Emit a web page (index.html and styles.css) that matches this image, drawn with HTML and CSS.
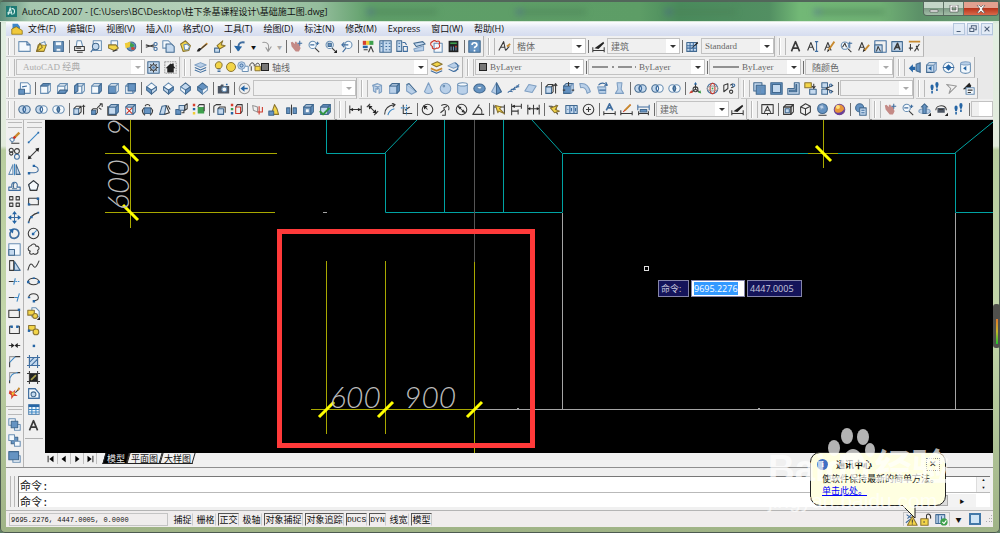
FILE: index.html
```html
<!DOCTYPE html>
<html lang="zh-CN">
<head>
    <meta charset="UTF-8">
    <meta name="viewport" content="width=device-width, initial-scale=1.0">
    <title>AutoCAD 2007</title>
    <link rel="stylesheet" href="styles.css">
</head>
<body>
    <div class="window">
        <header class="titlebar">
            <svg class="app-icon" viewBox="0 0 16 16"><rect width="16" height="16" fill="#1d7a74"/><path d="M3 13L6 3l3 10M8 4c4-1 6 3 3 8M2 10h5" fill="none" stroke="#d9f3ee" stroke-width="1.6"/></svg>
            <h1>AutoCAD 2007 - [C:\Users\BC\Desktop\柱下条基课程设计\基础施工图.dwg]</h1>
            <div class="backdrop"><i></i><i></i><i></i><i></i></div>
            <div class="window-buttons">
                <button aria-label="最小化"><svg viewBox="0 0 10 8"><path d="M1 5h8v2H1z"/></svg></button>
                <button aria-label="最大化"><svg viewBox="0 0 10 8"><path d="M1 0h8v7H1zM3 2v3h4V2z" fill-rule="evenodd"/></svg></button>
                <button class="close" aria-label="关闭"><svg viewBox="0 0 10 8"><path d="M1 0h2l2 2 2-2h2L6 4l3 4H7L5 6 3 8H1l3-4z"/></svg></button>
            </div>
        </header>

        <nav class="menubar">
            <svg class="doc-icon" viewBox="0 0 16 16"><path d="M2 1h7l3 4v6H2z" fill="#3f86c9"/><path d="M1 8l6-3 8 5v5H1z" fill="#f0c93c" stroke="#8a6b12"/></svg>
            <a href="#">文件(F)</a>
            <a href="#">编辑(E)</a>
            <a href="#">视图(V)</a>
            <a href="#">插入(I)</a>
            <a href="#">格式(O)</a>
            <a href="#">工具(T)</a>
            <a href="#">绘图(D)</a>
            <a href="#">标注(N)</a>
            <a href="#">修改(M)</a>
            <a href="#">Express</a>
            <a href="#">窗口(W)</a>
            <a href="#">帮助(H)</a>
            <div class="mdi-buttons">
                <button aria-label="最小化图形"><svg viewBox="0 0 10 10"><path d="M2 8h5"/></svg></button>
                <button aria-label="还原图形"><svg viewBox="0 0 10 10"><path d="M3 3V1h6v5H7M1 4h5v4H1z"/></svg></button>
                <button aria-label="关闭图形"><svg viewBox="0 0 10 10"><path d="M2 2l6 6M8 2L2 8"/></svg></button>
            </div>
        </nav>

        <div class="toolbars">
            <div class="toolrow">
                <div class="toolbar" data-tools="new open save | plot preview publish dwf | cut copy paste match block | undo drop redo drop-off | pan zoom zoomwin zoomprev | props center palettes sheet markup calc | help"></div>
                <div class="toolbar">
                    <span class="tools" data-tools="textstyle"></span>
                    <span class="combo"><select aria-label="文字样式"><option>楷体</option></select></span>
                    <span class="tools" data-tools="| dimstyle"></span>
                    <span class="combo"><select aria-label="标注样式"><option>建筑</option></select></span>
                    <span class="tools" data-tools="| tablestyle"></span>
                    <span class="combo latin"><select aria-label="表格样式"><option>Standard</option></select></span>
                </div>
                <div class="toolbar" data-tools="mtext dtext edittext findtext stylebrush scaletext justify space"></div>
            </div>
            <div class="toolrow">
                <div class="toolbar">
                    <span class="combo workspace latin"><select aria-label="工作空间" disabled><option>AutoCAD 经典</option></select></span>
                    <span class="tools" data-tools="gear home"></span>
                </div>
                <div class="toolbar">
                    <span class="tools" data-tools="layers"></span>
                    <span class="combo layer">
                        <span class="prefix" data-icons="bulb sun vpfreeze unlock"></span><i class="swatch"></i>
                        <select aria-label="图层"><option>轴线</option></select>
                    </span>
                    <span class="tools" data-tools="makecurrent layerprev"></span>
                </div>
                <div class="toolbar">
                    <span class="combo color latin"><i class="swatch"></i><select aria-label="颜色"><option>ByLayer</option></select></span>
                    <span class="tools" data-tools="|"></span>
                    <span class="combo linetype latin"><svg viewBox="0 0 44 6"><path d="M0 3h16M20 3h2M26 3h14M43 3h1"/></svg><select aria-label="线型"><option>ByLayer</option></select></span>
                    <span class="tools" data-tools="|"></span>
                    <span class="combo lineweight latin"><svg viewBox="0 0 26 6"><path d="M0 3h26"/></svg><select aria-label="线宽"><option>ByLayer</option></select></span>
                    <span class="tools" data-tools="|"></span>
                    <span class="combo plotstyle"><select aria-label="打印样式" disabled><option>随颜色</option></select></span>
                </div>
                <div class="toolbar" data-tools="walkback orbitbox orbitball orbitcyl"></div>
            </div>
            <div class="toolrow">
                <div class="toolbar">
                    <span class="tools" data-tools="namedviews | vtop vbottom vleft vright vfront vback | isosw isose isone isonw | camera | prevview"></span>
                    <span class="combo viewlist"><select aria-label="视图" disabled><option></option></select></span>
                </div>
                <div class="toolbar" data-tools="polysolid box wedge cone sphere cylinder torus pyramid helix planar | extrude presspull sweep revolve loft | union subtract intersect | move3d rotate3d align3d"></div>
                <div class="toolbar">
                    <span class="tools" data-tools="vpdialog vpsingle vppoly vpobject vpclip |"></span>
                    <span class="combo"><select aria-label="视口比例" disabled><option></option></select></span>
                </div>
                <div class="toolbar" data-tools="walk fly walkset"></div>
            </div>
            <div class="toolrow">
                <div class="toolbar" data-tools="union subtract intersect | extrudeface moveface offsetface deleteface rotateface taperface copyface colorface | copyedge coloredge | imprint clean separate shell check"></div>
                <div class="toolbar">
                    <span class="tools" data-tools="dimlin dimalign dimarc dimord | dimrad dimjog dimdia dimang | qdim dimbase dimcont | leader tolerance centermark | dimedit dimtedit dimupdate |"></span>
                    <span class="combo"><select aria-label="当前标注样式"><option>建筑</option></select></span>
                    <span class="tools" data-tools="dimstyle"></span>
                </div>
                <div class="toolbar" data-tools="wire2d | wire3d hidden realistic conceptual | visualmgr"></div>
                <div class="toolbar last">
                    <span class="tools" data-tools="pan zoom orbit swivel walk |"></span>
                    <span class="combo rest"></span>
                </div>
            </div>
        </div>

        <main class="workspace-area">
            <div class="side-tools">
                <div class="toolcol" data-tools="erase copyobj mirror offset array move rotate scale stretch trim extend breakpt break join chamfer fillet explode"></div>
                <div class="toolcol second" data-tools="orderfront orderback orderabove"></div>
            </div>
            <div class="side-tools">
                <div class="toolcol" data-tools="line xline pline polygon rect arc circle cloud spline ellipse ellipsearc insert makeblock point hatch gradient region table mtext"></div>
            </div>

            <div class="drawing">
                <div class="canvas">
                    <svg class="model" viewBox="45 120 948 333" preserveAspectRatio="xMinYMin slice">
                        <g class="cyan">
                            <path d="M326.5 120V153.5H385.5M385.5 153.5V212.5H562.5M444.5 120V212M503.5 120V212M562.5 212V153.5H955.5V212.5H993"/>
                            <path d="M385 153L417 120M532 120L562 153M955 153L993 122"/>
                        </g>
                        <path class="cursor" d="M474.5 120V262"/>
                        <path class="white" d="M562.5 213V409M955.5 213V409M474 409.5H993M323 212.5H327M517 408.5H519M758 408.5H760"/>
                        <path class="yellow" d="M130.5 120V228M105 153.5H277M105 212.5H275M823.5 120V168M808 153.5H838"/>
                        <path class="yellow" d="M326.5 261V434M385.5 261V434M474.5 262V453M311 409.5H474"/>
                        <path class="tick" d="M123 146L138 161M123 205L138 220M816 146L831 161M319 417L334 402M378 417L393 402M467 417L482 402"/>
                        <g class="dims">
                            <text x="330" y="408">600</text>
                            <text x="404" y="408">900</text>
                            <text transform="translate(129 210) rotate(-90)">600</text>
                            <text transform="translate(129 136) rotate(-90)">900</text>
                        </g>
                        <rect class="pick" x="644.5" y="266.5" width="4" height="4"/>
                        <rect class="highlight" x="279.5" y="231.5" width="253" height="214"/>
                    </svg>
                    <div class="dynamic-input">
                        <label for="dyn-x">命令:</label>
                        <input id="dyn-x" value="9695.2276">
                        <output>4447.0005</output>
                    </div>
                </div>
                <div class="layout-tabs">
                    <button class="nav" aria-label="首个"><svg viewBox="0 0 12 12"><path d="M2 2h1v8H2zM9 2v8L4 6z"/></svg></button>
                    <button class="nav" aria-label="上一个"><svg viewBox="0 0 12 12"><path d="M8 2v8L3 6z"/></svg></button>
                    <button class="nav" aria-label="下一个"><svg viewBox="0 0 12 12"><path d="M4 2v8l5-4z"/></svg></button>
                    <button class="nav" aria-label="末个"><svg viewBox="0 0 12 12"><path d="M3 2v8l5-4zM9 2h1v8H9z"/></svg></button>
                    <button class="tab active">模型</button>
                    <button class="tab">平面图</button>
                    <button class="tab">大样图</button>
                </div>
            </div>
        </main>

        <section class="command">
            <div class="grip"></div>
            <div class="command-box">
                <div class="history">
                    <span>命令:</span>
                    <div class="spin"><button aria-label="向上滚动">▲</button><button aria-label="向下滚动">▼</button></div>
                </div>
                <div class="prompt">
                    <label for="cmd">命令:</label>
                    <input id="cmd">
                    <div class="hscroll"><i></i><button aria-label="向右滚动">▶</button></div>
                </div>
            </div>
        </section>

        <footer class="statusbar">
            <output class="coords">9695.2276, 4447.0005, 0.0000</output>
            <button>捕捉</button>
            <button>栅格</button>
            <button class="on">正交</button>
            <button>极轴</button>
            <button class="on wide">对象捕捉</button>
            <button class="on wide">对象追踪</button>
            <button class="on latin">DUCS</button>
            <button class="on latin narrow">DYN</button>
            <button>线宽</button>
            <button class="on">模型</button>
            <div class="tray">
                <span class="tray-box" data-tools="comm lock std"></span>
                <button class="tray-menu" aria-label="状态栏菜单">▼</button>
                <button class="clean-screen" aria-label="全屏显示"></button>
                <svg class="resize" viewBox="0 0 8 8"><path d="M6 0h1v1H6zM4 3h1v1H4zM6 3h1v1H6zM1 6h1v1H1zM4 6h1v1H4zM6 6h1v1H6z"/></svg>
            </div>
        </footer>

        <aside class="balloon">
            <div class="balloon-head">
                <span class="info">i</span>
                <strong>通讯中心</strong>
                <button aria-label="关闭通知">✕</button>
            </div>
            <p>使软件保持最新的简单方法。</p>
            <a href="#">单击此处。</a>
            <svg class="tail" viewBox="0 0 16 14"><path d="M1 0L14 13V0" /></svg>
        </aside>

        <div class="watermark">
            <svg viewBox="0 0 48 36"><ellipse cx="20" cy="9" rx="6" ry="8"/><ellipse cx="36" cy="10" rx="6" ry="8"/><ellipse cx="7" cy="21" rx="6" ry="8"/><ellipse cx="43" cy="23" rx="5" ry="7"/><path d="M14 36c2-8 7-14 12-14s10 6 12 14z"/></svg>
            <b>Bai<span>du</span>经验</b>
            <em>jingyan.baidu.com</em>
        </div>
        <div class="gadget"></div>
    </div>

    <script src="tools.js"></script>
</body>
</html>
```

FILE: styles.css
```css
:root {
    --face: #f0f0f0;
    --edge: #a0a0a0;
    --ui: "Open Sans", "Noto Sans CJK SC", sans-serif;
    --mono: "Liberation Mono", "Noto Sans CJK SC", monospace;
}
* {
    box-sizing: border-box;
}
body {
    margin: 0;
    font-family: var(--ui);
    font-size: 9px;
    color: #111;
    background: #5d7f66;
}
button, input, select {
    font: inherit;
    color: inherit;
    margin: 0;
    padding: 0;
    border: 0;
    background: none;
}
a {
    color: inherit;
    text-decoration: none;
}
.window {
    position: relative;
    display: flex;
    flex-direction: column;
    height: 100vh;
    padding: 0 7px 6px 6px;
    overflow: hidden;
    border-radius: 5px;
    background: linear-gradient(180deg, #6a9a78 0, #e2efe2 24px, #e2ebdc 146px, #b8cc9e 150px, #c3d6aa 60%, #9fb386 100%);
    box-shadow: inset 0 0 0 1px #4c5a50;
}

/* title bar */
.titlebar {
    display: flex;
    align-items: center;
    flex: 0 0 22px;
    min-height: 0;
    margin: 0 -6px;
    padding-left: 6px;
    background: linear-gradient(90deg, #5f8f7c 0, #a5c7ae 3%, #b4d0b8 20%, #94bd9c 32%, #5f9f69 37%, #5d9d66 64%, #4a8b5c 68%, #528f62 77%, #72b876 80%, #71b275 88%, #5c9168 92%, #6b9b75 100%);
    border-top: 2px solid #52665a;
    border-bottom: 1px solid #d9eadb;
}
.app-icon {
    width: 11px;
    height: 11px;
}
.titlebar h1 {
    margin: 0 0 0 5px;
    font-size: 9px;
    font-weight: 400;
    line-height: 16px;
    white-space: nowrap;
}
.backdrop {
    display: flex;
    flex: 1;
    justify-content: space-around;
    filter: blur(3px);
}
.backdrop i {
    width: 70px;
    height: 6px;
    background: #4a8056;
    border-left: 7px solid #4a5c92;
    opacity: .5;
}
.window-buttons {
    display: flex;
    align-self: flex-start;
    border: 1px solid #56695d;
    border-top: 0;
    border-radius: 0 0 4px 4px;
    overflow: hidden;
}
.window-buttons button {
    width: 20px;
    height: 13px;
    display: grid;
    place-items: center;
    background: linear-gradient(#c4d5c8 45%, #7f9c87 50%, #a3bda8);
    border-right: 1px solid #5f7366;
}
.window-buttons .close {
    width: 34px;
    border: 0;
    background: linear-gradient(#e2a08f 45%, #b9351c 50%, #d9694a);
}
.window-buttons svg {
    width: 10px;
    height: 8px;
    fill: #fff;
    stroke: #4a4a4a;
    stroke-width: .6;
}

/* menu bar */
.menubar {
    display: flex;
    align-items: center;
    gap: 11px;
    flex: 0 0 14px;
    min-height: 0;
    padding-left: 5px;
    background: linear-gradient(#fdfdff, #e4e9f5 40%, #d5dcef);
    white-space: nowrap;
}
.menubar a {
    line-height: 14px;
}
.doc-icon {
    width: 12px;
    height: 12px;
    margin-right: -6px;
}
.mdi-buttons {
    display: flex;
    gap: 2px;
    margin-left: auto;
}
.mdi-buttons button {
    width: 12px;
    height: 12px;
    background: #e3ebf6;
    border: 1px solid #b4c6dc;
    display: grid;
    place-items: center;
}
.mdi-buttons svg {
    width: 8px;
    height: 8px;
    fill: none;
    stroke: #4c5e78;
    stroke-width: 1.3;
}

/* toolbars */
.toolbars {
    flex: 0 0 84px;
    min-height: 0;
    background: #e9e9e9;
    border-bottom: 1px solid #8a8a8a;
}
.toolrow {
    display: flex;
    gap: 2px;
    height: 21px;
}
.toolbar {
    display: flex;
    align-items: center;
    background: var(--face);
    border-right: 1px solid #b5b5b5;
    border-bottom: 1px solid #c9c9c9;
}
.toolbar.last {
    flex: 1;
    border-right: 0;
}
.toolbar::before {
    content: "";
    width: 5px;
    height: 17px;
    margin: 0 1px 0 2px;
    border: solid #b9b9b9;
    border-width: 0 1px;
    box-shadow: inset 1px 0 #fff;
}
.tools {
    display: flex;
    align-items: center;
}
.tool {
    width: 17px;
    height: 18px;
    display: grid;
    place-items: center;
}
.tool svg, .prefix svg {
    display: block;
    width: 13px;
    height: 13px;
}
.tool.drop {
    width: 9px;
    font-size: 5px;
}
.tool.drop-off {
    width: 9px;
    font-size: 5px;
    color: #aaa;
}
.sep {
    width: 1px;
    height: 13px;
    margin: 0 1px 0 2px;
    background: #6e6e6e;
}
.combo {
    position: relative;
    display: flex;
    align-items: center;
    width: 73px;
    height: 16px;
    padding-left: 3px;
    border: 1px solid #c2c2c2;
    background: linear-gradient(90deg, transparent calc(100% - 13px), #fff 0);
    color: #666;
}
.combo::after {
    content: "";
    position: absolute;
    right: 3px;
    top: 6px;
    border: 3px solid transparent;
    border-top-color: #333;
    border-bottom: 0;
}
.combo:has(select:disabled)::after {
    border-top-color: #aaa;
}
.combo.workspace::after {
    border-top-color: #333;
}
.combo select {
    flex: 1;
    min-width: 0;
    appearance: none;
    opacity: 1;
}
.combo.latin {
    font-family: "Liberation Serif", "Noto Sans CJK SC", serif;
}
.combo.workspace {
    width: 129px;
    padding-left: 6px;
    color: #aaa;
}
.combo.layer {
    width: 219px;
}
.combo.color {
    width: 109px;
}
.combo.linetype {
    width: 117px;
}
.combo.lineweight {
    width: 92px;
}
.combo.plotstyle {
    width: 88px;
    padding-left: 6px;
}
.combo.viewlist {
    width: 103px;
}
.combo.rest {
    flex: 1;
    width: auto;
}
.combo.rest::after {
    display: none;
}
.combo svg {
    flex: none;
}
.prefix {
    display: flex;
}
.prefix svg {
    width: 12px;
    height: 12px;
}
.linetype > svg {
    width: 44px;
    height: 6px;
}
.lineweight > svg {
    width: 26px;
    height: 6px;
}
.linetype > svg, .lineweight > svg {
    margin-right: 3px;
    stroke: #333;
}
.swatch {
    flex: none;
    width: 8px;
    height: 8px;
    margin-right: 3px;
    background: #777;
    border: 1px solid #222;
}

/* icon strokes and fills */
.tool svg, .prefix svg {
    fill: none;
    stroke-width: 1.3;
    stroke-linejoin: round;
}
.k { stroke: #3a3a3a; }
.n { stroke: #3f6d9f; }
.c { stroke: #3b86c4; }
.rd { stroke: #cc3527; }
.gr { stroke: #999; }
.or { stroke: #c88a2e; stroke-width: 2.2; }
.bx { stroke: #42698f; fill: #c4d9ee; }
.bd { stroke: #42698f; fill: #6593c2; }
.sf { stroke: #7f9fc2; fill: #b9d0e9; }
.wf { stroke: #6a8fb3; fill: #f4f9fd; }
.yf { stroke: #8a7430; fill: #f3d548; }
.K { fill: #222; }
.N { fill: #2565a5; }
.R { fill: #d5402f; }
.G { fill: #3ea04c; }
.Y { fill: #f0cc35; }
.P { fill: #c48a86; }
.A { fill: #4b5563; }

/* side toolbars and drawing area */
.workspace-area {
    display: flex;
    flex: 1;
    min-height: 0;
    background: var(--face);
}
.side-tools {
    width: 18px;
    margin-right: 1px;
    border-right: 1px solid #b5b5b5;
}
.side-tools + .side-tools {
    border-right: 0;
}
.toolcol {
    padding: 2px 0 5px;
    border-bottom: 1px solid #b0b0b0;
}
.toolcol.second {
    border-bottom: 0;
}
.toolcol::before {
    content: "";
    display: block;
    height: 4px;
    margin: 0 1px 1px 2px;
    border: solid #b9b9b9;
    border-width: 1px 0;
}
.toolcol .tool {
    height: 16px;
}
.drawing {
    flex: 1;
    display: flex;
    flex-direction: column;
    min-width: 0;
    margin-left: 1px;
}
.canvas {
    position: relative;
    flex: 1;
    min-height: 0;
    background: #000;
    overflow: hidden;
}
.model {
    display: block;
    width: 100%;
    height: 100%;
    fill: none;
}
.cyan { stroke: #00a3a3; }
.cursor { stroke: #555; }
.white { stroke: #a5a5a5; }
.yellow { stroke: #a8a800; }
.tick { stroke: #ff0; stroke-width: 3; }
.pick { stroke: #ddd; }
.highlight { stroke: #ff3a3a; stroke-width: 5; }
.dims text {
    font: italic 300 30px Lato, sans-serif;
    fill: #bbb;
}
.dynamic-input {
    position: absolute;
    left: 613px;
    top: 160px;
    display: flex;
    gap: 2px;
    color: #c9c9dd;
}
.dynamic-input > * {
    height: 17px;
    line-height: 15px;
    padding: 0 2px;
    border: 1px solid #8484a8;
    background: #14145a;
}
.dynamic-input label {
    width: 31px;
}
.dynamic-input input {
    width: 54px;
    background: #fff;
    color: #111;
    outline: 0;
}
.dynamic-input output {
    width: 55px;
}
.dynamic-input input::selection {
    background: #3399ff;
    color: #fff;
}
.layout-tabs {
    display: flex;
    flex: 0 0 14px;
    align-items: flex-start;
}
.layout-tabs .nav {
    width: 13px;
    height: 11px;
    border-right: 1px solid #c0c0c0;
}
.layout-tabs .nav svg {
    display: block;
    width: 10px;
    height: 10px;
    margin: 0 auto;
}
.layout-tabs .tab {
    position: relative;
    isolation: isolate;
    height: 11px;
    padding: 0 3px;
    line-height: 10px;
}
.layout-tabs .tab::before {
    content: "";
    position: absolute;
    inset: 0;
    z-index: -1;
    border: solid #222;
    border-width: 0 1px 1px;
    clip-path: none;
    transform: skewX(-16deg);
}
.layout-tabs .nav + .tab {
    margin-left: 7px;
}
.layout-tabs .active {
    color: #eee;
}
.layout-tabs .active::before {
    background: #000;
}

/* command line */
.command {
    display: flex;
    flex: 0 0 44px;
    min-height: 0;
    padding: 8px 3px 3px 4px;
    background: var(--face);
    border-top: 1px solid #8e8e8e;
    border-bottom: 1px solid #b4b4b4;
}
.command .grip {
    width: 5px;
    margin-right: 3px;
    border: solid #b9b9b9;
    border-width: 0 1px;
}
.command-box {
    flex: 1;
    background: #fff;
    border-left: 1px solid #777;
    border-top: 1px solid #777;
    font-family: var(--mono);
    font-size: 11px;
}
.history, .prompt {
    display: flex;
    align-items: center;
    padding-left: 1px;
}
.history {
    height: 16px;
    border-bottom: 1px solid #b9b9b9;
}
.prompt {
    height: 15px;
}
.prompt input {
    flex: 1;
    outline: 0;
}
.spin {
    display: flex;
    flex-direction: column;
    width: 14px;
    height: 15px;
    margin-left: auto;
    background: #f3f3f3;
    border-left: 1px solid #ddd;
}
.spin button {
    flex: 1;
    font-size: 4px;
    line-height: 7px;
}
.hscroll {
    display: flex;
    align-items: center;
    justify-content: flex-end;
    width: 150px;
    height: 13px;
    margin-right: 14px;
    background: #f3f3f3;
}
.hscroll i {
    width: 20px;
    height: 11px;
    border: 1px solid #aaa;
    background: #ddd;
}
.hscroll button {
    width: 28px;
    font-size: 5px;
}

/* status bar */
.statusbar {
    display: flex;
    align-items: center;
    gap: 2px;
    flex: 0 0 16px;
    min-height: 0;
    padding-left: 3px;
    background: #f0eded;
}
.coords {
    width: 159px;
    height: 13px;
    margin-right: 2px;
    padding-left: 1px;
    line-height: 12px;
    border: 1px solid #c4c4c4;
    font-family: var(--mono);
    font-size: 7px;
}
.statusbar > button {
    width: 21px;
    height: 13px;
    line-height: 11px;
    white-space: nowrap;
    border: 1px solid transparent;
    border-right-color: #ccc;
}
.statusbar > .on {
    border-left-color: #555;
    border-top-color: #555;
}
.statusbar > .wide {
    width: 39px;
}
.statusbar > .latin {
    font-family: var(--mono);
    font-size: 8px;
}
.statusbar > .narrow {
    width: 17px;
}
.tray {
    display: flex;
    align-items: center;
    gap: 4px;
    margin-left: auto;
}
.tray-box {
    display: flex;
    height: 14px;
    align-items: center;
    border: solid #c4c4c4;
    border-width: 1px 1px 0;
}
.tray-box .tool {
    width: 15px;
    height: 13px;
}
.tray-menu {
    width: 9px;
    font-size: 6px;
}
.clean-screen {
    width: 12px;
    height: 12px;
    margin-left: 2px;
    border: 2px solid #4378a8;
    background: #cfe4f5;
}
.resize {
    width: 8px;
    height: 8px;
    fill: #aaa;
}

/* notification, watermark and desktop gadget sit over the window */
.balloon {
    position: absolute;
    right: 54px;
    bottom: 27px;
    width: 136px;
    height: 54px;
    padding: 5px 5px 0 11px;
    border: 1px solid #222;
    border-radius: 10px;
    background: #ffffe1;
    font-size: 9px;
    white-space: nowrap;
}
.balloon-head {
    display: flex;
    align-items: center;
    height: 12px;
    margin-left: -5px;
}
.balloon-head strong {
    margin-left: 8px;
}
.balloon-head button {
    width: 14px;
    height: 13px;
    margin-left: auto;
    border: 1px dotted #888;
    line-height: 10px;
}
.info {
    width: 11px;
    height: 11px;
    border-radius: 50%;
    background: #3f6fc4;
    color: #fff;
    font: bold 8px/11px "Liberation Serif", serif;
    text-align: center;
}
.balloon p {
    margin: 3px 0 0;
    line-height: 12px;
}
.balloon a {
    display: block;
    width: max-content;
    line-height: 12px;
    color: #00f;
    text-decoration: underline;
}
.tail {
    position: absolute;
    left: 90px;
    top: 52px;
    width: 16px;
    height: 14px;
    fill: #ffffe1;
    stroke: #222;
}
.watermark {
    position: absolute;
    right: 56px;
    bottom: 20px;
    width: 176px;
    color: rgba(255, 255, 255, .7);
    pointer-events: none;
    white-space: nowrap;
}
.watermark svg {
    display: block;
    width: 48px;
    height: 36px;
    margin: 0 0 -14px 59px;
    fill: rgba(255, 255, 255, .7);
}
.watermark b {
    display: block;
    height: 40px;
    font: bold 37px/40px "Liberation Sans", "Noto Sans CJK SC", sans-serif;
}
.watermark span {
    margin-right: 4px;
}
.watermark em {
    display: block;
    font: 21px/24px "Liberation Sans", sans-serif;
}
.gadget {
    position: absolute;
    right: 0;
    top: 304px;
    width: 7px;
    height: 44px;
    border-radius: 3px;
    background: linear-gradient(#e07a2a, #c9b62a 50%, #21c42f) 3px 15px / 2px 25px no-repeat, #50504c;
}
```

FILE: tools.js
```js
// shape helpers, all icons are drawn on a 16x16 grid
const p = (cls, d) => `<path class="${cls}" d="${d}"/>`;
const c = (cls, x, y, r) => `<circle class="${cls}" cx="${x}" cy="${y}" r="${r}"/>`;
const e = (cls, x, y, rx, ry) => `<ellipse class="${cls}" cx="${x}" cy="${y}" rx="${rx}" ry="${ry}"/>`;
const cube = (front, top, side) =>
    p(front, 'M2 5H11V14H2Z') + p(top, 'M2 5L5 2H14L11 5Z') + p(side, 'M11 5L14 2V11L11 14Z');
const iso = (top, left, right) =>
    p(top, 'M8 1L14 6L8 10L2 6Z') + p(left, 'M2 6L8 10V15L2 10Z') + p(right, 'M8 10L14 6V10L8 15Z');
const lens = p('k', 'M10 10L15 15') + c('wf', 7, 6, 4.5);
const pencil = p('or', 'M14 2L7 12') + p('K', 'M5 15L6 11L8 13Z');
const letterA = p('k', 'M2 13L6 3L10 13M4 9H9');
const feet = p('N', 'M3 6a2 3 0 0 1 4 0L6 10H4ZM4 11H6L6 14H4ZM9 3a2 3 0 0 1 4 0L12 7H10ZM10 8H12V11H10Z');
const caret = p('K', 'M12 16H16V12Z');
const rings = (a, b) => c(a, 5.5, 8, 4.5) + c(b, 10.5, 8, 4.5) + p('n', 'M8 4.5C6 7 6 9 8 11.5C10 9 10 7 8 4.5');
const hand = p('P', 'M1 3L3 2L6 5V2H8L9 5L11 4L13 10L11 14H7L2 8Z');
const dimH = p('k', 'M1 3V13M15 3V13M1 8H15') + p('K', 'M1 8L5 6V10ZM15 8L11 6V10Z');
const dimBrush = p('k', 'M1 9V15M1 13H15M15 9V15') + p('K', 'M3 10L14 2L15 4L8 11Z');

const icons = {
    new: p('wf', 'M1 2H11L15 6V14H1Z') + p('n', 'M11 2V6H15'),
    open: p('yf', 'M2 14L4 6H14L11 14Z') + p('wf', 'M5 5L12 2L13 6') + p('yf', 'M2 14L6 4L9 9Z'),
    save: p('bd', 'M2 2H14V14H2Z') + p('wf', 'M4 2H12V7H4Z') + p('wf', 'M5 10H11V14H5Z'),
    plot: p('wf', 'M5 1H10L12 8H4Z') + p('k', 'M2 8H14V13H2ZM4 10H10M5 15H12'),
    preview: p('wf', 'M4 1H14V13H4Z') + c('bx', 7, 8, 4) + p('n', 'M4 11L1 15'),
    publish: p('wf', 'M5 1H13V8H5Z') + p('yf', 'M2 6H11L14 10L9 13L2 10Z') + p('k', 'M7 14L13 12'),
    dwf: c('bd', 9, 8, 5.5) + p('G', 'M8 3L13 6L10 10L7 7Z') + p('Y', 'M1 4L8 2L7 9L2 10Z') + p('R', 'M9 9H13V12H9Z'),
    cut: p('k', 'M1 6L12 9M1 9L11 6') + c('n', 13, 5, 2) + c('n', 13, 11, 2),
    copy: p('wf', 'M1 1H8L11 4V10H1Z') + p('bx', 'M5 5H12L15 8V15H5Z'),
    paste: p('yf', 'M2 5L8 1L14 7L12 13L5 14Z') + p('wf', 'M6 6L10 5L13 8L11 12L7 12Z'),
    match: p('K', 'M1 14C3 9 5 9 7 11L4 14Z') + p('or', 'M7 10L14 4') + p('k', 'M6 11L13 5'),
    block: p('bx', 'M2 10H8V15H2Z') + p('yf', 'M5 7L12 1L10 6L15 7L8 11Z'),
    undo: '<path class="n" stroke-width="2.4" d="M13 3C7 2 4 5 6 13"/>' + p('N', 'M0 7L5 14L10 8Z'),
    redo: p('gr', 'M3 3C9 2 12 5 10 13M7 9L10 14L14 8'),
    pan: hand + p('n', 'M12 1V7M9 4H15'),
    zoom: lens + p('n', 'M11 4H15M13 2V6M4 6H9'),
    zoomwin: lens + p('bd', 'M5 4H9V8H5Z') + caret,
    zoomprev: c('wf', 9, 6, 4.5) + p('n', 'M6 10L2 15M1 6H9M4 3L1 6L4 9'),
    props: p('R', 'M1 1H5V6H1Z') + p('Y', 'M5 1H9V6H5Z') + p('G', 'M9 1H14V6H9Z') + p('N', 'M1 7H7V10H1Z') + p('k', 'M8 15L11 8L14 15M2 12H7'),
    center: p('bx', 'M1 1H15V15H1Z') + p('n', 'M5 1V15M8 4H10M12 4H14M8 8H10M12 8H14M8 12H10M12 12H14M2 4H4M2 8H4'),
    palettes: p('bx', 'M1 1H7V14H1Z') + p('n', 'M3 4H5M3 8H5M8 3H11L13 6M9 8H14V14H9Z'),
    sheet: p('bx', 'M1 4L12 2L15 5L4 8Z') + p('sf', 'M1 11L13 7V13L2 14Z'),
    markup: p('wf', 'M5 4H15V15H5Z') + p('rd', 'M3 2C5 0 7 1 8 2C11 0 13 3 11 5C13 8 11 11 8 10C6 12 2 11 3 8C0 7 0 3 3 2Z'),
    calc: p('K', 'M2 1H14V15H2Z') + p('G', 'M4 3H12V5H4Z') + p('wf', 'M5 8V13M8 8V13M11 8V13') + p('R', 'M10 7H12V9H10Z'),
    help: p('bd', 'M1 1H15V15H1Z') + '<path stroke="#fff" stroke-width="2" d="M5 6C5 2 11 3 11 6C11 8 8 8 8 10M8 12V14"/>',

    textstyle: p('k', 'M1 13L7 2L9 12M3 9H9M9 13C12 11 12 9 14 8') + p('or', 'M11 8L15 5'),
    dimstyle: dimBrush,
    tablestyle: p('bx', 'M1 3H13V14H1Z') + p('n', 'M1 7H13M5 3V14M9 3V14M1 10H13') + p('K', 'M6 11L14 2L15 4Z'),
    mtext: '<path class="k" stroke-width="2" d="M3 14L8 2L13 14M5 10H11"/>',
    dtext: letterA + p('n', 'M11 2H15M13 2V14M11 14H15'),
    edittext: letterA + pencil,
    findtext: c('wf', 6, 7, 4.5) + p('k', 'M3 9L6 4L8 9M10 11L14 15') + p('n', 'M12 2V10M10 4H15'),
    stylebrush: letterA + p('or', 'M15 6L9 13') + p('K', 'M7 15L8 11L10 13Z'),
    scaletext: p('n', 'M1 1H15V15H1Z') + p('bx', 'M1 6H10V15H1Z') + p('k', 'M3 14L5 8L8 14'),
    justify: p('bx', 'M1 2H14V14H1Z') + '<path class="k" stroke-width="2" d="M4 12L8 4L11 12M5 9H10"/>',
    space: p('or', 'M1 2H15') + p('k', 'M1 10H6M3 5V13M14 5L8 14M10 7L13 13'),

    gear: p('bx', 'M1 1H15V15H1Z') + c('k', 8, 8, 3.5) + c('n', 8, 8, 1) + p('k', 'M8 2V4M8 12V14M2 8H4M12 8H14M4 4L5 5M11 11L12 12M4 12L5 11M11 5L12 4'),
    home: '<path class="gr" stroke-dasharray="2 1" d="M1 1H15V15H1Z"/>' + p('K', 'M2 9L8 3L10 4V3H12V6L14 9H12V14H4V9Z'),
    layers: p('sf', 'M1 5L8 2L15 5L8 8Z') + p('n', 'M1 8L8 11L15 8M1 11L8 14L15 11'),
    bulb: p('yf', 'M5 10C1 6 4 1 8 1C12 1 14 6 10 10Z') + p('n', 'M6 12H10M6 14H10'),
    sun: c('yf', 8, 8, 6),
    vpfreeze: p('wf', 'M7 7H15V14H7Z') + c('sf', 6, 6, 5) + c('n', 6, 6, 2),
    unlock: p('yf', 'M8 7H15V13H8Z') + p('k', 'M1 7C1 1 8 1 7 7M3 7V13M9 6C9 2 14 2 14 6'),
    makecurrent: p('yf', 'M2 4L9 1L15 4L8 7Z') + p('or', 'M1 9L8 12L15 9') + p('n', 'M1 12L8 15L15 12'),
    layerprev: p('sf', 'M1 6L9 2L15 6L8 9Z') + p('n', 'M2 10L8 13L14 10M10 2C15 5 15 10 9 13'),
    walkback: p('N', 'M1 9L6 4V7H9V11H6V14Z') + p('bd', 'M10 4L15 2V14L10 12Z'),
    orbitbox: cube('bx', 'wf', 'sf') + p('N', 'M4 9L8 6V12Z'),
    orbitball: c('wf', 8, 8, 6.5) + p('n', 'M1 8H15') + p('N', 'M8 4L12 8L8 12L4 8Z'),
    orbitcyl: p('wf', 'M2 3V13C4 16 12 16 14 13V3') + e('sf', 8, 3, 6, 2) + p('N', 'M5 9L9 6V12Z'),

    namedviews: p('wf', 'M3 1H12L15 4V14H3Z') + p('bd', 'M1 9H8V15H1Z') + p('n', 'M5 6L11 5'),
    vtop: cube('wf', 'bd', 'wf'),
    vbottom: cube('wf', 'wf', 'wf') + p('bd', 'M2 14L5 10H14L11 14Z'),
    vleft: cube('wf', 'wf', 'wf') + p('bd', 'M2 5L6 2V11L2 14Z'),
    vright: cube('wf', 'wf', 'bd'),
    vfront: cube('bd', 'wf', 'wf'),
    vback: cube('wf', 'wf', 'wf') + p('bd', 'M5 2H14V11H5Z'),
    isosw: iso('wf', 'bd', 'bx'),
    isose: iso('wf', 'bx', 'bd'),
    isone: iso('bx', 'wf', 'bd'),
    isonw: iso('bd', 'bd', 'wf'),
    camera: p('A', 'M1 5H4L5 3H8V5H15V14H1Z') + c('wf', 9, 9, 3) + p('N', 'M11 2H13V4H11Z'),
    prevview: c('gr', 8, 8, 6.5) + p('N', 'M3 8L8 4V7H12V9H8V12Z'),
    polysolid: p('sf', 'M2 4L8 6V9L6 8V13L3 11V7ZM8 6L13 4V12L10 14V9ZM2 4L8 2L13 4'),
    box: cube('sf', 'bx', 'bd'),
    wedge: p('sf', 'M2 3L14 12L8 15L2 11Z') + p('bx', 'M2 3L5 2L14 12'),
    cone: p('sf', 'M8 1L13 12C11 15 5 15 3 12Z'),
    sphere: c('sf', 8, 8, 6.5) + c('wf', 6, 5, 1),
    cylinder: p('sf', 'M2 3V13C4 16 12 16 14 13V3') + e('wf', 8, 3, 6, 2),
    torus: e('bd', 8, 8, 7, 5.5) + e('wf', 8, 7, 3, 1.5),
    pyramid: p('sf', 'M8 1L14 12L8 15L2 12Z') + p('bd', 'M8 1L14 12L8 15Z'),
    helix: p('n', 'M1 13C4 9 6 14 5 10C5 7 9 12 9 8C9 4 13 9 13 5L15 3M3 11L7 12M7 8L11 9M11 5L15 6'),
    planar: p('sf', 'M1 11L6 3L15 5L10 13Z'),
    extrude: p('bx', 'M1 6H8V14H1Z') + p('k', 'M1 6L4 3H10L8 6M10 3V12L8 14M13 14V3M11 5L13 2L15 5'),
    presspull: cube('bd', 'bx', 'sf') + p('k', 'M8 0V5M1 10H4M12 10H15'),
    sweep: p('sf', 'M1 2C7 1 12 4 14 12L10 14C9 8 6 6 2 7Z'),
    revolve: p('sf', 'M2 6H12V14H4Z') + p('n', 'M3 4C6 0 11 1 13 4M12 0L14 4L10 5M4 10H12'),
    loft: p('sf', 'M5 1H11L10 9L13 14H3L6 9Z'),
    union: rings('bx', 'bx'),
    subtract: rings('bx', 'wf'),
    intersect: rings('wf', 'wf') + p('bd', 'M8 5C6 7 6 9 8 11C10 9 10 7 8 5'),
    move3d: p('k', 'M8 9V2M8 9L2 13M8 9L14 13') + p('R', 'M0 14L3 10L5 13Z') + p('N', 'M6 3H10L8 0Z') + p('G', 'M11 13L14 10L15 14Z') + c('k', 8, 9, 3),
    rotate3d: c('n', 8, 8, 6.5) + `<ellipse class="rd" cx="8" cy="8" rx="3" ry="6.5"/>` + e('gr', 8, 8, 6.5, 3) + p('G', 'M7 7H9V9H7Z'),
    align3d: p('k', 'M1 4L6 2V8L1 12ZM9 4L12 2M10 7L13 6') + c('k', 10, 12, 2) + c('n', 13, 4, 1.5),
    vpdialog: p('bx', 'M1 1H11V11H1Z') + p('bd', 'M4 4H15V15H4Z') + p('wf', 'M5 7H14M9 7V15'),
    vpsingle: p('bd', 'M1 1H15V15H1Z') + p('bx', 'M3 3H13V13H3Z'),
    vppoly: p('bx', 'M9 1H15V15H1V8H9Z') + p('bd', 'M12 3V12H3V10H11V3Z'),
    vpobject: p('yf', 'M1 1H9V7H1Z') + p('bx', 'M7 9H15V15H7Z') + p('k', 'M12 2V7M10 5L12 8L14 5'),
    vpclip: p('bx', 'M1 1H8V7H1ZM1 9H8V15H1Z') + p('k', 'M6 8L15 4M6 8L15 12') + c('n', 12, 4, 1.5) + c('n', 12, 12, 1.5),
    walk: feet,
    fly: p('gr', 'M2 3L14 5L5 14L7 8Z'),
    walkset: p('K', 'M1 9L9 1L11 4V9Z') + p('wf', 'M5 7H15V15H5Z') + p('k', 'M7 10H13M7 13H11'),

    extrudeface: p('bx', 'M1 7H7V14H1Z') + p('k', 'M1 7L4 4H10L7 7M10 4V11L7 14M13 14V2M11 4H15'),
    moveface: p('bd', 'M2 9H7V14H2Z') + p('k', 'M2 9L4 7H9V12L7 14M9 6L14 1M12 1H15V5M11 6L14 8'),
    offsetface: cube('bx', 'bx', 'bd') + p('k', 'M1 4V15H12'),
    deleteface: cube('wf', 'bx', 'bx') + p('rd', 'M3 6L10 13M10 6L3 13'),
    rotateface: p('bd', 'M4 6H12V13H4Z') + p('k', 'M4 6C0 9 2 13 5 15M12 6C16 9 14 13 11 15M5 4C6 1 10 1 11 4'),
    taperface: p('bx', 'M2 14L5 4L10 3L8 14Z') + p('k', 'M10 3L14 12L8 14M12 3L15 8'),
    copyface: p('bd', 'M1 8H7V14H1Z') + p('bx', 'M5 3H12V9H5Z') + p('k', 'M12 9V3L15 1V7ZM8 12H11V9'),
    colorface: p('G', 'M7 5H15V13H7Z') + p('k', 'M7 5L9 2H15V10') + p('R', 'M1 1H4V4H1Z') + p('N', 'M1 6H4V9H1Z') + p('Y', 'M1 11H4V14H1Z'),
    copyedge: p('bx', 'M6 7H13V14H6Z') + p('k', 'M1 4V12M1 4L4 2H10M6 7L8 5H15V12'),
    coloredge: p('rd', 'M7 5H13V13H7Z') + p('k', 'M7 5L9 2H15V10L13 13') + p('R', 'M1 1H4V4H1Z') + p('G', 'M1 6H4V9H1Z') + p('N', 'M1 11H4V14H1Z'),
    imprint: p('gr', 'M2 3L8 5V11L3 9Z') + p('rd', 'M10 4V14M8 11H14V5'),
    clean: p('yf', 'M8 2L11 7L13 14H4Z') + p('bd', 'M1 10H7V15H1Z'),
    separate: p('bd', 'M2 6H6V13H2ZM10 6H14V13H10Z') + p('k', 'M8 2V15'),
    shell: cube('bd', 'bx', 'bd') + p('wf', 'M4 7H9V12H4Z'),
    check: cube('bx', 'bd', 'bd') + '<path stroke="#2f9440" stroke-width="2.6" d="M1 10L5 14L13 6"/>',

    dimlin: dimH,
    dimalign: p('k', 'M1 5L5 1M10 15L15 10M3 3L13 13') + p('K', 'M3 3L8 4L4 8ZM13 13L8 12L12 8Z'),
    dimarc: p('k', 'M2 14C2 7 7 3 14 2M11 0L15 2L12 5') + p('c', 'M6 15C7 10 10 8 14 7'),
    dimord: p('k', 'M4 2V13H15M6 9L12 5') + '<path class="c" stroke-dasharray="2 1" d="M1 6H10M8 2V15"/>',
    dimrad: c('k', 8, 8, 6.5) + p('k', 'M8 8L4 4') + p('K', 'M3 3L8 4L4 8Z'),
    dimjog: p('k', 'M4 3C10 0 15 4 13 9M3 12L8 8L7 6L11 4M5 15H9V9'),
    dimdia: c('k', 8, 8, 6.5) + p('K', 'M3 4L8 5L6 8ZM13 12L8 11L10 8Z') + p('k', 'M4 4L12 12'),
    dimang: p('k', 'M15 14H1L9 2M7 5C11 6 13 9 12 14'),
    qdim: p('k', 'M1 2V14M1 5H14M14 2V14') + p('yf', 'M3 3L10 5L8 7L14 13L7 10L6 12Z'),
    dimbase: p('k', 'M2 1V15M2 4H14M2 10H10M14 1V7M10 8V14') + p('K', 'M2 4L6 2V6Z'),
    dimcont: p('k', 'M1 2V14M8 2V14M15 2V14M1 7H15') + p('K', 'M1 7L4 5V9ZM15 7L12 5V9Z'),
    leader: p('k', 'M1 4H5L12 14M10 2V9') + p('yf', 'M3 6L12 3L9 8L14 10L8 12Z'),
    tolerance: p('bx', 'M1 3H15V13H1Z') + p('n', 'M6 3V13M11 3V13M3 8H4M8 6V10M13 6V10'),
    centermark: c('k', 8, 8, 6.5) + p('k', 'M8 5V11M5 8H11'),
    dimedit: '<path class="n" stroke-width="2" d="M4 9L8 1L12 9M6 6H10"/>' + p('k', 'M1 10V15M15 10V15M1 13H15'),
    dimtedit: p('rd', 'M4 11L13 2') + p('or', 'M6 9L13 2') + p('k', 'M1 9V15M1 13H15M15 10V15'),
    dimupdate: p('n', 'M1 2V9M15 2V9M1 5H15') + p('bd', 'M4 8H12V11H4Z') + p('k', 'M2 10V15M14 10V15M2 13H14'),
    wire2d: p('k', 'M1 2H15V13H1ZM4 12L8 4L12 12M6 9H10M8 13V15'),
    wire3d: cube('k', 'k', 'k') + p('bx', 'M4 7H9V12H4Z'),
    hidden: p('k', 'M8 1L14 4V11L8 15L2 12V5ZM2 5L8 7L14 4M8 7V15'),
    realistic: c('bd', 8, 7, 6) + p('sf', 'M4 4L8 2L10 6L6 8Z') + p('k', 'M3 15H13'),
    conceptual: '<circle cx="8" cy="8" r="6.5" fill="#e8953a" stroke="#754b91"/><circle cx="6" cy="5" r="2.5" fill="#ffe07a"/><path fill="#653e9c" d="M2 10C6 14 11 12 14 7C14 16 4 17 2 10Z"/>',
    visualmgr: c('bd', 7, 6, 5) + p('bx', 'M7 6H15V15H7Z') + p('n', 'M9 9H13M9 12H13'),
    orbit: e('sf', 8, 10, 7, 3) + p('bd', 'M6 13V5H4L8 1L12 5H10V13Z') + caret,
    swivel: p('A', 'M3 6H12V12H3Z') + p('k', 'M1 9C1 2 14 1 14 9M5 8H10') + caret,

    erase: '<path stroke="#c88a2e" stroke-width="3" d="M8 8L14 2"/><path stroke="#cc3527" stroke-width="3" d="M6 10L9 7"/>' + p('wf', 'M2 10L5 8L8 11L5 14Z') + p('k', 'M4 15H14'),
    copyobj: c('k', 4, 4, 2.5) + c('k', 11, 5, 3) + c('n', 11, 12, 3) + c('k', 4, 8, 2),
    mirror: p('wf', 'M6 2V14H1Z') + p('bx', 'M10 2V14H15Z') + p('c', 'M8 1V15'),
    offset: p('n', 'M1 14H15V10H11C14 2 2 2 5 10H1Z') + p('bx', 'M5 12H11M8 5C5 6 7 9 7 11'),
    array: p('k', 'M2 2H6V6H2ZM10 2H14V6H10ZM2 10H6V14H2ZM10 10H14V14H10Z'),
    move: p('n', 'M8 2V14M2 8H14') + p('N', 'M8 0L11 4H5ZM8 16L11 12H5ZM0 8L4 5V11ZM16 8L12 5V11Z'),
    rotate: '<path class="n" stroke-width="2" d="M5 3C14 0 17 12 8 14C2 14 1 8 4 5"/>' + p('N', 'M1 3L7 2L6 8Z'),
    scale: p('wf', 'M1 1H15V15H1Z') + p('bx', 'M1 8H8V15H1Z'),
    stretch: p('k', 'M2 2H7V14H2Z') + p('bx', 'M8 3L15 14H8Z'),
    trim: p('k', 'M1 8H7') + '<path class="c" stroke-dasharray="2 1" d="M9 8H15"/>' + p('c', 'M7 12L9 4'),
    extend: p('k', 'M1 8H8') + p('c', 'M8 8H12M11 13L14 3'),
    breakpt: p('k', 'M1 4H14V13H1Z') + p('N', 'M12 2H15V5H12Z'),
    break: p('k', 'M4 4H2V13H14V4H12') + p('N', 'M3 3H6V6H3ZM10 3H13V6H10Z'),
    join: p('k', 'M1 8H6M10 8H15') + p('K', 'M4 5L8 8L4 11ZM12 5L8 8L12 11Z'),
    chamfer: p('k', 'M2 15V8M8 2H15') + p('c', 'M2 9L9 2') + p('gr', 'M2 8V2H8'),
    fillet: p('k', 'M2 15V11M11 2H15') + p('c', 'M2 12C2 6 6 2 12 2') + p('gr', 'M2 11V2H10'),
    explode: p('R', 'M2 4L6 6L9 3L8 8L12 11L7 11L4 15L4 10L1 8Z') + p('Y', 'M4 7L8 6L6 11Z') + p('k', 'M9 7L14 2') + p('or', 'M12 4L14 1'),
    orderfront: p('wf', 'M1 1H9V9H1ZM8 8H15V15H8Z') + p('bd', 'M4 4H12V12H4Z'),
    orderback: p('bd', 'M4 4H12V12H4Z') + p('wf', 'M1 1H8V8H1ZM8 9H15V15H8Z'),
    orderabove: p('wf', 'M6 7H15V15H6Z') + p('bd', 'M1 2H13V12H1Z'),

    line: p('c', 'M2 14L14 2') + p('N', 'M1 13H3V15H1ZM13 1H15V3H13Z'),
    xline: p('k', 'M2 14L14 2') + p('K', 'M1 15L2 10L6 14ZM15 1L10 2L14 6Z'),
    pline: p('n', 'M2 12H9C16 12 15 4 8 4') + p('N', 'M1 11H4V14H1ZM7 2H10V5H7Z'),
    polygon: p('wf', 'M8 2L14 7L12 14H4L2 7Z') + p('k', 'M8 2L14 7L12 14H4L2 7Z'),
    rect: p('k', 'M2 4H14V12H2Z') + p('N', 'M1 10H4V13H1ZM12 3H15V6H12Z'),
    arc: p('k', 'M2 14C3 8 7 4 14 2') + p('N', 'M1 13H3V15H1ZM4 6H7V9H4ZM13 1H15V3H13Z'),
    circle: c('k', 8, 8, 6.5) + p('c', 'M8 8L12 4') + p('N', 'M6 7H9V10H6Z'),
    cloud: p('k', 'M5 3C7 0 11 1 11 4C15 3 16 8 13 9C15 13 10 15 8 13C5 15 2 13 4 10C0 9 1 4 5 3Z'),
    spline: p('k', 'M1 14C4 3 6 6 8 9C10 12 12 9 15 2'),
    ellipse: e('k', 8, 8, 6.5, 4) + p('N', 'M0 7H3V10H0ZM7 3H10V5H7ZM13 7H16V10H13Z'),
    ellipsearc: p('k', 'M2 8C3 2 13 2 14 8C14 12 10 12 8 12') + p('N', 'M1 7H4V9H1ZM7 11H10V14H7Z'),
    insert: p('wf', 'M6 1H11L15 5V12H6Z') + p('yf', 'M1 4H9V10H1Z') + c('yf', 10, 11, 3) + caret,
    makeblock: p('yf', 'M2 3H10V9H2Z') + c('yf', 11, 11, 3.5) + p('N', 'M1 8H4V11H1Z'),
    point: p('N', 'M7 7H10V10H7Z'),
    hatch: p('bx', 'M3 3H13V13H3Z') + p('n', 'M3 0V16M13 0V16M0 3H16M0 13H16M3 9L9 3M5 13L13 5'),
    gradient: p('K', 'M3 3H13V13H3Z') + p('k', 'M3 0V16M13 0V16M0 3H16M0 13H16') + '<path stroke="#a9a04c" stroke-width="2" d="M5 11L11 5"/>',
    region: p('wf', 'M2 2H10L15 8V14H2Z') + p('n', 'M2 2H10L15 8V14H2Z') + c('bx', 8, 9, 3),
    table: p('wf', 'M2 2H15V14H2Z') + p('c', 'M2 8H15M2 11H15M6 3V14M11 3V14') + p('N', 'M2 2H15V5H2Z'),

    comm: p('n', 'M2 2L10 8M3 7L8 2M1 12L6 8') + p('yf', 'M9 4L15 15H3Z') + p('k', 'M9 8V12M9 13V14'),
    lock: p('yf', 'M1 7H10V15H1Z') + p('k', 'M8 7V3C9 0 14 1 13 7M5 10V12'),
    std: p('bx', 'M1 2H12V13H1Z') + p('n', 'M4 2V13M8 4V8') + c('G', 11, 11, 4.5) + '<path stroke="#fff" d="M9 11L11 13L14 9"/>'
};

const svg = name => `<svg viewBox="0 0 16 16">${icons[name] || ''}</svg>`;

function makeTool(name) {
    if (name === '|') {
        return '<span class="sep"></span>';
    }
    if (name.startsWith('drop')) {
        return `<button class="tool ${name}" aria-label="${name}">▼</button>`;
    }
    return `<button class="tool" aria-label="${name}">${svg(name)}</button>`;
}

document.querySelectorAll('[data-tools]').forEach(bar => {
    bar.innerHTML = bar.dataset.tools.split(' ').map(makeTool).join('');
});
document.querySelectorAll('[data-icons]').forEach(box => {
    box.innerHTML = box.dataset.icons.split(' ').map(svg).join('');
});

// dynamic input starts with its value selected
document.getElementById('dyn-x').select();
```
